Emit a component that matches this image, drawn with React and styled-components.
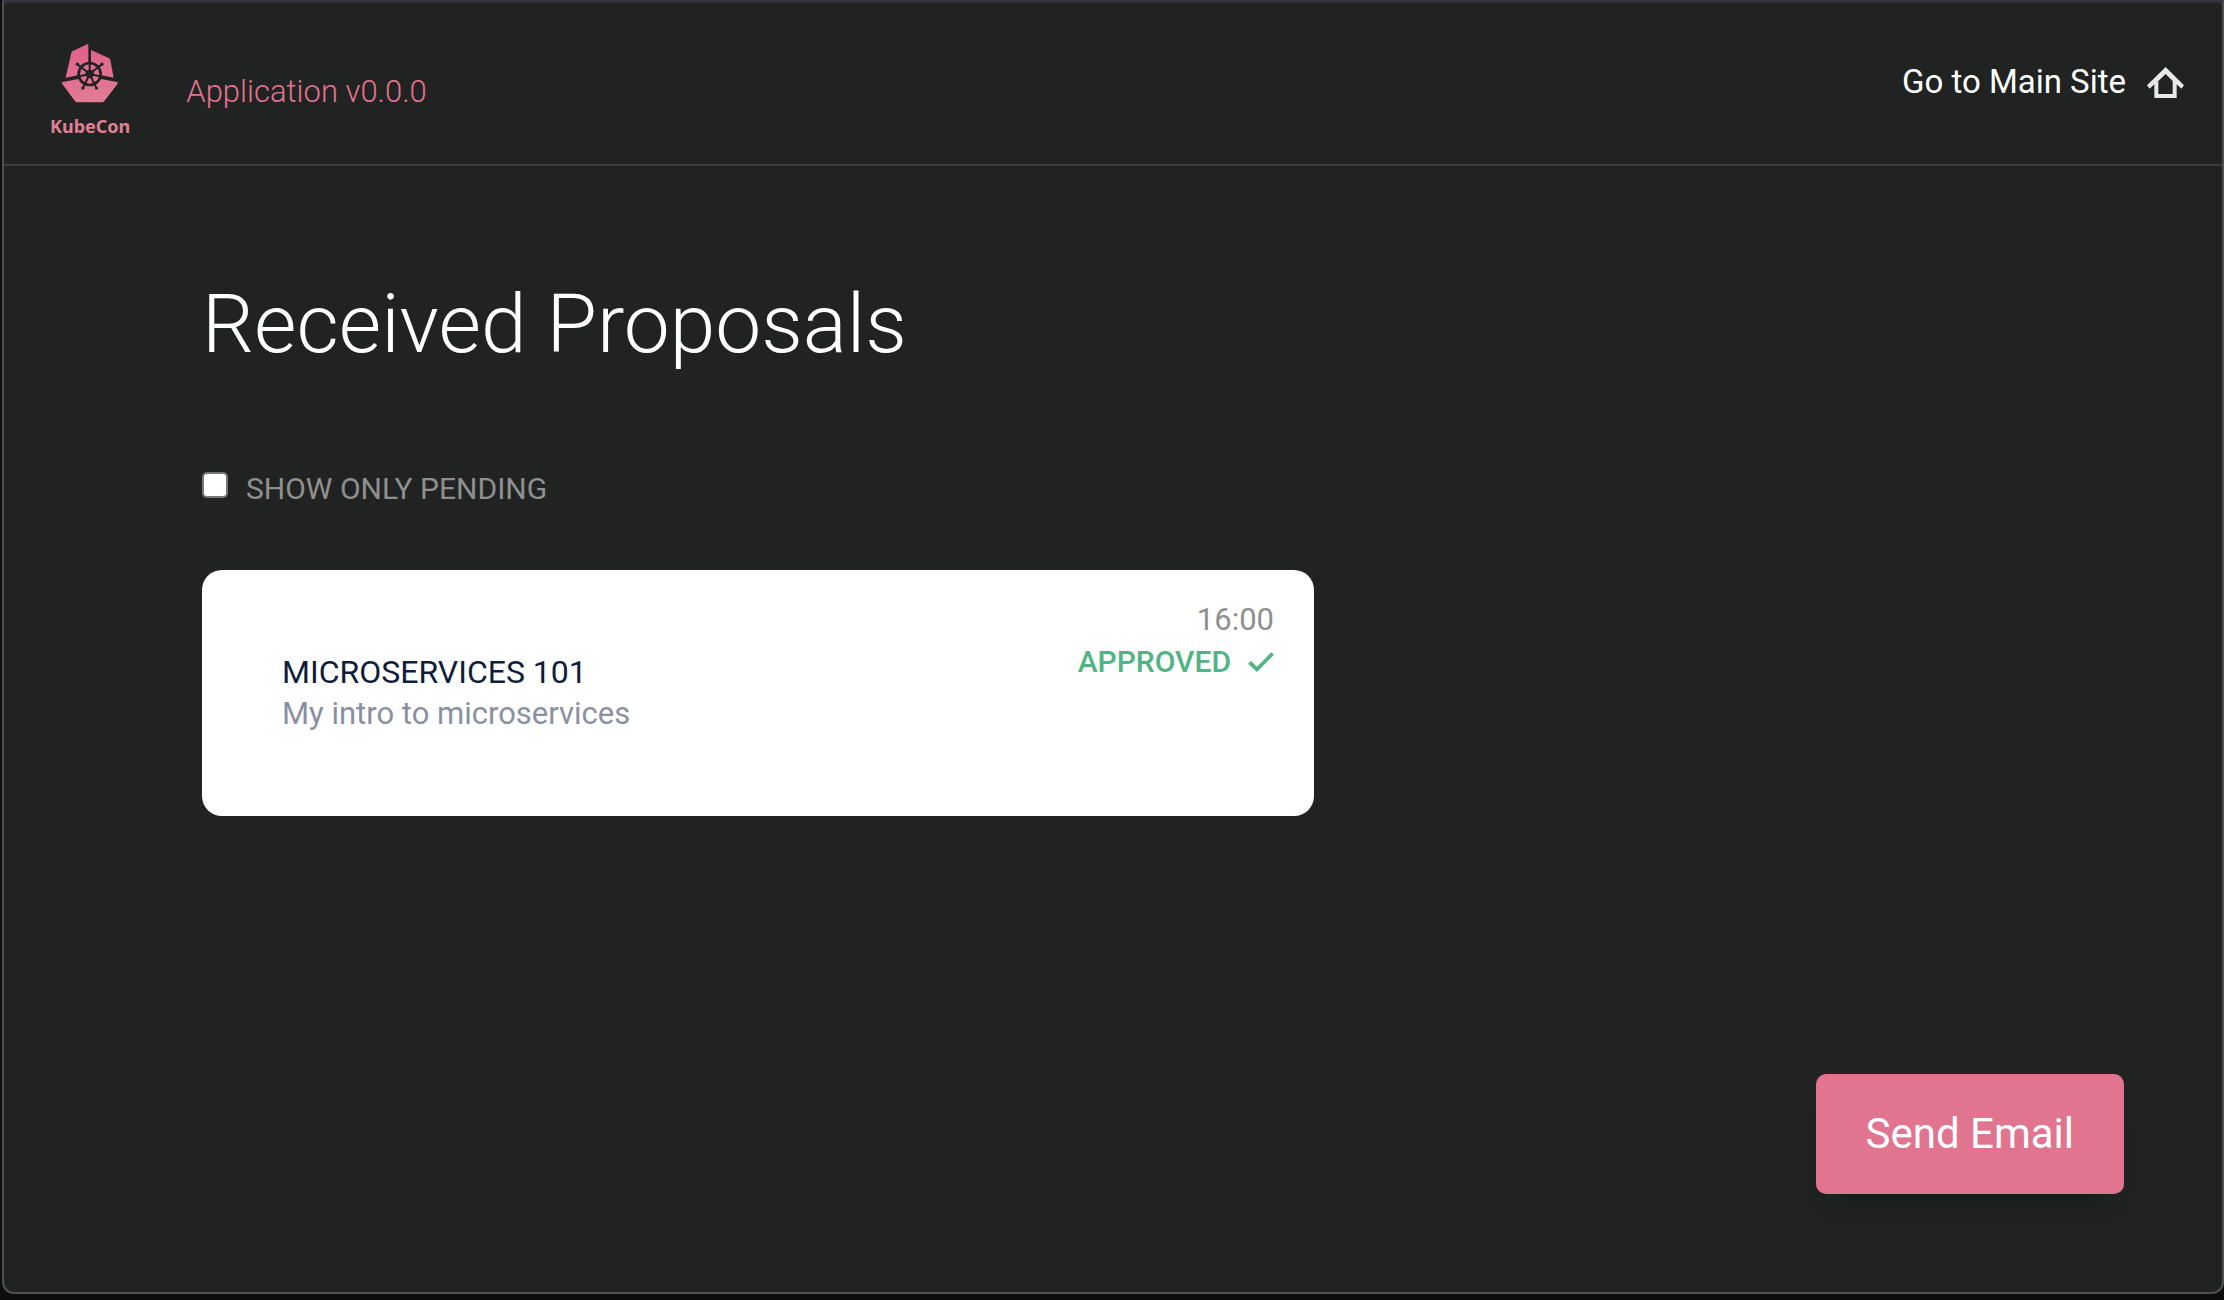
import React, { useState } from "react";
import styled, { createGlobalStyle } from "styled-components";

const GlobalStyle = createGlobalStyle`
  *, *::before, *::after { box-sizing: border-box; }
  body {
    margin: 0;
    background: #0e0d0e;
    color: #ffffff;
    font-family: Roboto, "Liberation Sans", sans-serif;
  }
`;

const Window = styled.div`
  display: flex;
  flex-direction: column;
  min-height: calc(100vh - 6px);
  margin-left: 2px;
  border: 2px solid #4e504f;
  border-top-color: #36383f;
  border-radius: 0 0 12px 12px;
  background: #212322;
  box-shadow: inset 0 2px 0 #292b2b;
`;

const Header = styled.header`
  display: flex;
  justify-content: space-between;
  align-items: flex-start;
  padding: 41px 38px 25px 46px;
  border-bottom: 2px solid #3a3c3b;
`;

const Brand = styled.div`
  display: flex;
  align-items: center;
  gap: 56px;
`;

const Logo = styled.a`
  display: flex;
  flex-direction: column;
  align-items: center;
  gap: 10px;
  color: #e08094;
  font: 700 18px/26px "Noto Sans", sans-serif;
  text-decoration: none;
`;

const Version = styled.span`
  color: #e1748f;
  font-size: 31px;
  font-weight: 350;
`;

const SiteLink = styled.a`
  display: flex;
  align-items: center;
  gap: 21px;
  color: #ffffff;
  font-size: 33px;
  line-height: 78px;
  text-decoration: none;
`;

const Main = styled.main`
  display: flex;
  flex: 1;
  flex-direction: column;
  padding: 110px 98px 98px 198px;
`;

const Title = styled.h1`
  margin: 0;
  font-size: 82px;
  font-weight: 350;
  line-height: 96px;
`;

const Filter = styled.label`
  display: flex;
  align-items: flex-start;
  align-self: flex-start;
  gap: 18px;
  margin: 98px 0 62px;
  color: #8f8f8f;
  font-size: 30px;
  line-height: 38px;
  text-transform: uppercase;
`;

const Checkbox = styled.input`
  appearance: none;
  width: 26px;
  height: 26px;
  margin: 2px 0 0;
  border: 2px solid #767676;
  border-radius: 5px;
  background: #ffffff;

  &:checked {
    background: #e1748f;
  }
`;

const Card = styled.article`
  display: flex;
  justify-content: space-between;
  align-items: flex-start;
  width: 100%;
  max-width: 1112px;
  border-radius: 20px;
  background: #ffffff;
`;

const Summary = styled.div`
  padding: 81px 80px;
  line-height: 42px;
`;

const TalkTitle = styled.h2`
  margin: 0;
  color: #0e1d3a;
  font-size: 32px;
  font-weight: 400;
  text-transform: uppercase;
`;

const Description = styled.p`
  margin: 0;
  color: #8a90a1;
  font-size: 31px;
`;

const Details = styled.div`
  display: flex;
  flex-direction: column;
  align-items: flex-end;
  padding: 29px 40px;
  line-height: 42px;
`;

const Time = styled.time`
  color: #8f8f8f;
  font-size: 31px;
`;

const Status = styled.span`
  display: flex;
  align-items: center;
  gap: 17px;
  color: #51b485;
  font-size: 30px;
  font-weight: 500;
  text-transform: uppercase;
`;

const SendButton = styled.button`
  align-self: flex-end;
  margin-top: auto;
  padding: 36px 50px;
  border: 0;
  border-radius: 10px;
  background: #e1748f;
  box-shadow: 0 24px 24px -20px rgba(0, 0, 0, 0.35);
  color: #ffffff;
  font: 450 42px/48px Roboto, "Liberation Sans", sans-serif;
  cursor: pointer;
`;

const CENTER = { x: 149, y: 132 };
const SPOKES = Array.from({ length: 7 }, (_, i) => -90 + (i * 360) / 7);
const HANDLES = SPOKES.filter((_, i) => ![0, 2, 5].includes(i));

const polar = (angle, radius) => ({
  x: CENTER.x + radius * Math.cos((angle * Math.PI) / 180),
  y: CENTER.y + radius * Math.sin((angle * Math.PI) / 180),
});

function HelmMark() {
  return (
    <svg width="60" height="60" viewBox="60 39 180 180" aria-hidden="true">
      <defs>
        <linearGradient id="mark" gradientUnits="userSpaceOnUse" x1="130" y1="40" x2="160" y2="219">
          <stop offset="0" stopColor="#df5f89" />
          <stop offset="1" stopColor="#e27d95" />
        </linearGradient>
      </defs>
      <g fill="url(#mark)">
        <path d="M145 41 98 63q-3 2-4 5L77 143l68-14Z" />
        <path d="M153 60 206 84q4 2 5 6l10 53-68-14Z" />
        <path d="M65 157 149 140l85 17q-1 4-4 8l-37 48q-3 4-7 4h-75q-3 0-6-4l-36-48q-4-4-4-8Z" />
      </g>
      <g stroke="#212322" fill="#212322">
        <circle cx={CENTER.x} cy={CENTER.y} r="33" strokeWidth="8" fill="url(#mark)" />
        {SPOKES.map((angle) => {
          const end = polar(angle, 31);
          return <line key={angle} x1={CENTER.x} y1={CENTER.y} x2={end.x} y2={end.y} strokeWidth="6" />;
        })}
        <circle cx={CENTER.x} cy={CENTER.y} r="13" stroke="none" />
        {HANDLES.map((angle) => {
          const start = polar(angle, 33);
          const end = polar(angle, 47);
          return (
            <g key={angle}>
              <line x1={start.x} y1={start.y} x2={end.x} y2={end.y} strokeWidth="6" />
              <circle cx={end.x} cy={end.y} r="5" stroke="none" />
            </g>
          );
        })}
      </g>
    </svg>
  );
}

function HomeIcon() {
  return (
    <svg width="37" height="31" viewBox="800 75 111 93" aria-hidden="true">
      <path
        fill="#e8e8e8"
        fillRule="evenodd"
        d="M856 75 911 130 903 140 889 127V168H822V127L808 140 800 130ZM856 96 834 117V156H877V117Z"
      />
    </svg>
  );
}

function CheckIcon() {
  return (
    <svg width="26" height="20" viewBox="627 272 78 60" aria-hidden="true">
      <path fill="currentColor" d="M636 299 654 316 697 273 705 280 654 332 627 307Z" />
    </svg>
  );
}

export default function App() {
  const [onlyPending, setOnlyPending] = useState(false);

  return (
    <>
      <GlobalStyle />
      <Window>
        <Header>
          <Brand>
            <Logo href="#">
              <HelmMark />
              KubeCon
            </Logo>
            <Version>Application v0.0.0</Version>
          </Brand>
          <SiteLink href="#">
            Go to Main Site
            <HomeIcon />
          </SiteLink>
        </Header>
        <Main>
          <Title>Received Proposals</Title>
          <Filter>
            <Checkbox
              type="checkbox"
              checked={onlyPending}
              onChange={(event) => setOnlyPending(event.target.checked)}
            />
            Show only pending
          </Filter>
          {!onlyPending && (
            <Card>
              <Summary>
                <TalkTitle>Microservices 101</TalkTitle>
                <Description>My intro to microservices</Description>
              </Summary>
              <Details>
                <Time>16:00</Time>
                <Status>
                  Approved
                  <CheckIcon />
                </Status>
              </Details>
            </Card>
          )}
          <SendButton type="button">Send Email</SendButton>
        </Main>
      </Window>
    </>
  );
}
